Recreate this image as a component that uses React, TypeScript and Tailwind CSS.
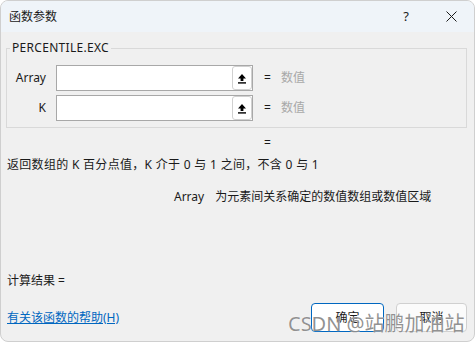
import React from "react";

const font = { fontFamily: '"Noto Sans", "Noto Sans CJK SC", sans-serif' };

function RefButton() {
  return (
    <div className="flex h-full w-[20px] items-center justify-center rounded-[3px] border border-[#d0d0d0] bg-white">
      <svg width="10" height="11" viewBox="0 0 10 11">
        <path d="M5 1 L9 5.5 H6.4 V8 H3.6 V5.5 H1 Z" fill="#000" />
        <rect x="1" y="9.2" width="8" height="1.4" fill="#000" />
      </svg>
    </div>
  );
}

function ArgRow({ label }: { label: string }) {
  return (
    <div className="flex h-[26px] items-center">
      <div className="w-[39px] text-right text-[12px] text-[#1a1a1a]">{label}</div>
      <div className="ml-[10px] flex h-full w-[197px] justify-end border border-[#a8a8a8] bg-white">
        <RefButton />
      </div>
      <div className="ml-[11px] text-[12px] text-[#1a1a1a]">=</div>
      <div className="ml-[10px] text-[12px] text-[#a8a8a8]">数值</div>
    </div>
  );
}

export default function App() {
  return (
    <div className="h-[342px] w-[475px] bg-white" style={font}>
      <div className="relative flex h-full w-full flex-col overflow-hidden rounded-[8px] border border-[#cfcfcf] bg-[#f0f0f0]">
        {/* title bar */}
        <div className="flex h-[31px] shrink-0 items-center bg-[#eff4f9] pl-[8px]">
          <span className="text-[12px] text-[#1a1a1a]">函数参数</span>
          <span className="ml-auto text-[13px] text-[#1a1a1a]">?</span>
          <svg className="ml-[37px] mr-[17px]" width="11" height="11" viewBox="0 0 11 11">
            <path d="M0.5 0.5 L10.5 10.5 M10.5 0.5 L0.5 10.5" stroke="#1a1a1a" strokeWidth="1" />
          </svg>
        </div>

        <div className="flex flex-1 flex-col pl-[5px] pr-[7px] pt-[8px]">
          <fieldset className="border border-[#d9d9d9] pb-[6px] pt-[9px]">
            <legend className="ml-[3px] px-[2px] text-[12px] leading-[16px] tracking-[0.3px] text-[#1a1a1a]">PERCENTILE.EXC</legend>
            <div className="flex flex-col gap-[4px]">
              <ArgRow label="Array" />
              <ArgRow label="K" />
            </div>
          </fieldset>

          <div className="mt-[7px] pl-[258px] text-[12px] leading-[16px] text-[#1a1a1a]">=</div>
          <div className="mt-[6px] pl-[1px] text-[12px] leading-[16px] tracking-[0.3px] text-[#1a1a1a]">
            返回数组的 K 百分点值，K 介于 0 与 1 之间，不含 0 与 1
          </div>
          <div className="mt-[16px] flex pl-[168px] text-[12px] leading-[16px] text-[#1a1a1a]">
            <span>Array</span>
            <span className="ml-[11px]">为元素间关系确定的数值数组或数值区域</span>
          </div>

          <div className="mt-[68px] pl-[1px] text-[12px] leading-[16px] text-[#1a1a1a]">计算结果 =</div>

          <div className="mt-[14px] flex items-center">
            <a className="pl-[1px] text-[12px] leading-[16px] text-[#0067c0] underline" href="#">
              有关该函数的帮助(H)
            </a>
            <button className="ml-auto h-[29px] w-[73px] rounded-[4px] border border-[#0067c0] bg-white text-[12px] text-[#1a1a1a]">
              确定
            </button>
            <button className="ml-[12px] h-[29px] w-[71px] rounded-[4px] border border-[#d0d0d0] bg-[#fbfbfb] text-[12px] text-[#1a1a1a]">
              取消
            </button>
          </div>
        </div>

        {/* watermark */}
        <div
          className="pointer-events-none absolute left-[287px] top-[310px] text-[20px] leading-[26px] text-[rgba(110,110,110,0.75)]"
          style={{ textShadow: "0 0 1px #fff" }}
        >
          CSDN @站鹏加油站
        </div>
      </div>
    </div>
  );
}
